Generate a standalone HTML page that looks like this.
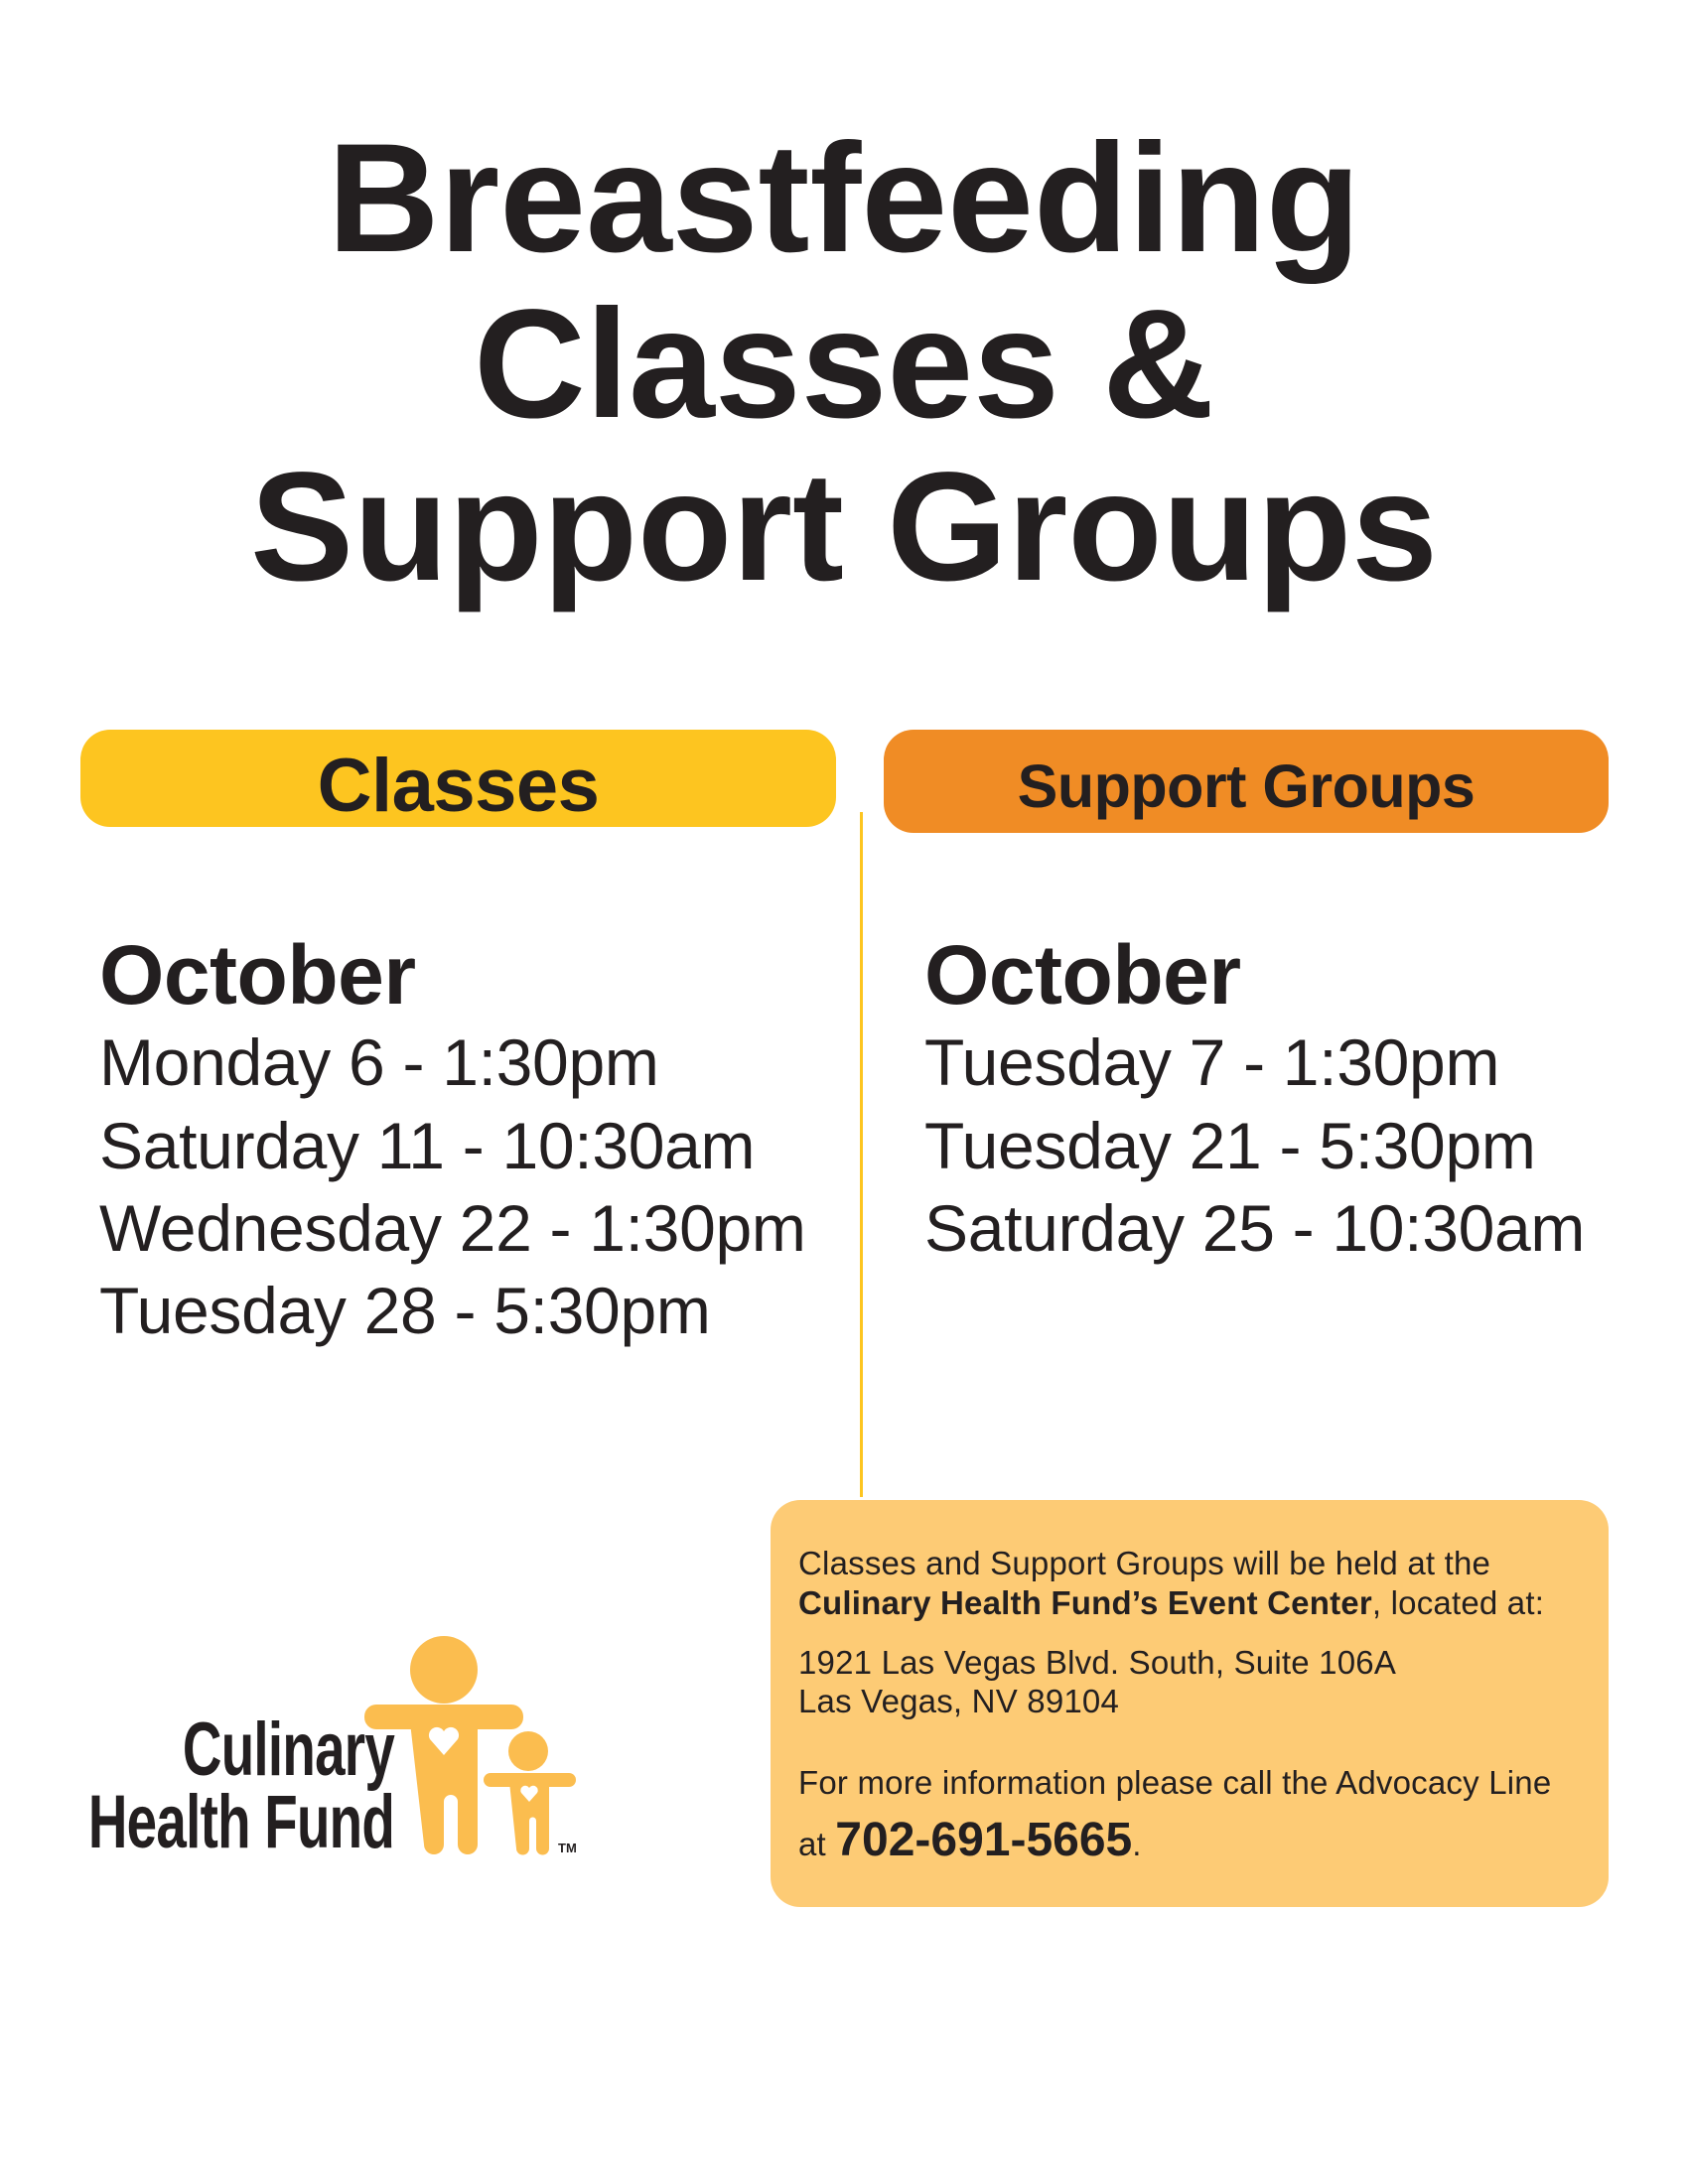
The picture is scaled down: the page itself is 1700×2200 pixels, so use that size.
<!DOCTYPE html>
<html><head><meta charset="utf-8"><style>
body{margin:0;width:1700px;height:2200px;background:#fff;position:relative;overflow:hidden;font-family:"Liberation Sans",sans-serif;color:#231f20}
.a{position:absolute;line-height:1;white-space:nowrap}
.t{left:0;width:1700px;text-align:center;font-weight:bold;font-size:156px;letter-spacing:0px;}
.bar{position:absolute;border-radius:30px}
.d{font-size:66px;letter-spacing:-0.3px;left:100px}
.r{left:931px}
.i{font-size:33px;left:804px;letter-spacing:0.2px}
.lg{font-weight:bold;font-size:76px;transform:scaleX(0.72);transform-origin:right top;right:1303px;letter-spacing:-1px}
</style></head><body>
<div class="a t" style="top:122px">Breastfeeding</div>
<div class="a t" style="top:289px">Classes &amp;</div>
<div class="a t" style="top:453px">Support Groups</div>

<div class="bar" style="left:81px;top:735px;width:761px;height:98px;background:#fdc520"></div>
<div class="bar" style="left:890px;top:735px;width:730px;height:104px;background:#f08c25"></div>
<div class="a" style="left:81px;width:761px;text-align:center;top:754px;font-size:76px;font-weight:bold;letter-spacing:-0.5px">Classes</div>
<div class="a" style="left:890px;width:730px;text-align:center;top:762px;font-size:61px;font-weight:bold;letter-spacing:-0.5px">Support Groups</div>
<div style="position:absolute;left:866px;top:818px;width:3px;height:690px;background:#fdc520"></div>

<div class="a" style="left:100px;top:940px;font-size:84px;font-weight:bold;letter-spacing:-0.5px">October</div>
<div class="a d" style="top:1037px">Monday 6 - 1:30pm</div>
<div class="a d" style="top:1121px">Saturday 11 - 10:30am</div>
<div class="a d" style="top:1204px">Wednesday 22 - 1:30pm</div>
<div class="a d" style="top:1287px">Tuesday 28 - 5:30pm</div>

<div class="a" style="left:931px;top:940px;font-size:84px;font-weight:bold;letter-spacing:-0.5px">October</div>
<div class="a d r" style="top:1037px">Tuesday 7 - 1:30pm</div>
<div class="a d r" style="top:1121px">Tuesday 21 - 5:30pm</div>
<div class="a d r" style="top:1204px">Saturday 25 - 10:30am</div>

<div class="bar" style="left:776px;top:1511px;width:844px;height:410px;background:#fdcb75"></div>
<div class="a i" style="top:1558px">Classes and Support Groups will be held at the</div>
<div class="a i" style="top:1598px"><b>Culinary Health Fund’s Event Center</b>, located at:</div>
<div class="a i" style="top:1658px">1921 Las Vegas Blvd. South, Suite 106A</div>
<div class="a i" style="top:1697px">Las Vegas, NV 89104</div>
<div class="a i" style="top:1779px">For more information please call the Advocacy Line</div>
<div class="a i" style="top:1830px">at <b style="font-size:48px;letter-spacing:0px">702-691-5665</b>.</div>

<div class="a lg" style="top:1725px">Culinary</div>
<div class="a lg" style="top:1798px">Health Fund</div>
<svg style="position:absolute;left:0;top:0" width="1700" height="2200">
<g fill="#fbbd4f">
<circle cx="447" cy="1682" r="34"/>
<rect x="367" y="1717" width="160" height="25" rx="12"/>
<path d="M413 1735 H481 V1858 a10 10 0 0 1 -20 0 V1815 a7 7 0 0 0 -14 0 V1858 a10 10 0 0 1 -20 0 Z"/>
<circle cx="532" cy="1764" r="20"/>
<rect x="487" y="1786" width="93" height="14" rx="7"/>
<path d="M513 1795 H553 V1862 a6 6 0 0 1 -13 0 V1834 a3.5 3.5 0 0 0 -7 0 V1862 a6 6 0 0 1 -13 0 Z"/>
</g>
<g fill="#fff">
<path d="M447 1768 L433 1752 a8 8 0 0 1 14 -8 a8 8 0 0 1 14 8 Z"/>
<path d="M533 1815 L525 1806 a4.5 4.5 0 0 1 8 -5 a4.5 4.5 0 0 1 8 5 Z"/>
</g>
<text x="562" y="1866" font-family="Liberation Sans" font-weight="bold" font-size="13" fill="#231f20">TM</text>
</svg>
</body></html>
